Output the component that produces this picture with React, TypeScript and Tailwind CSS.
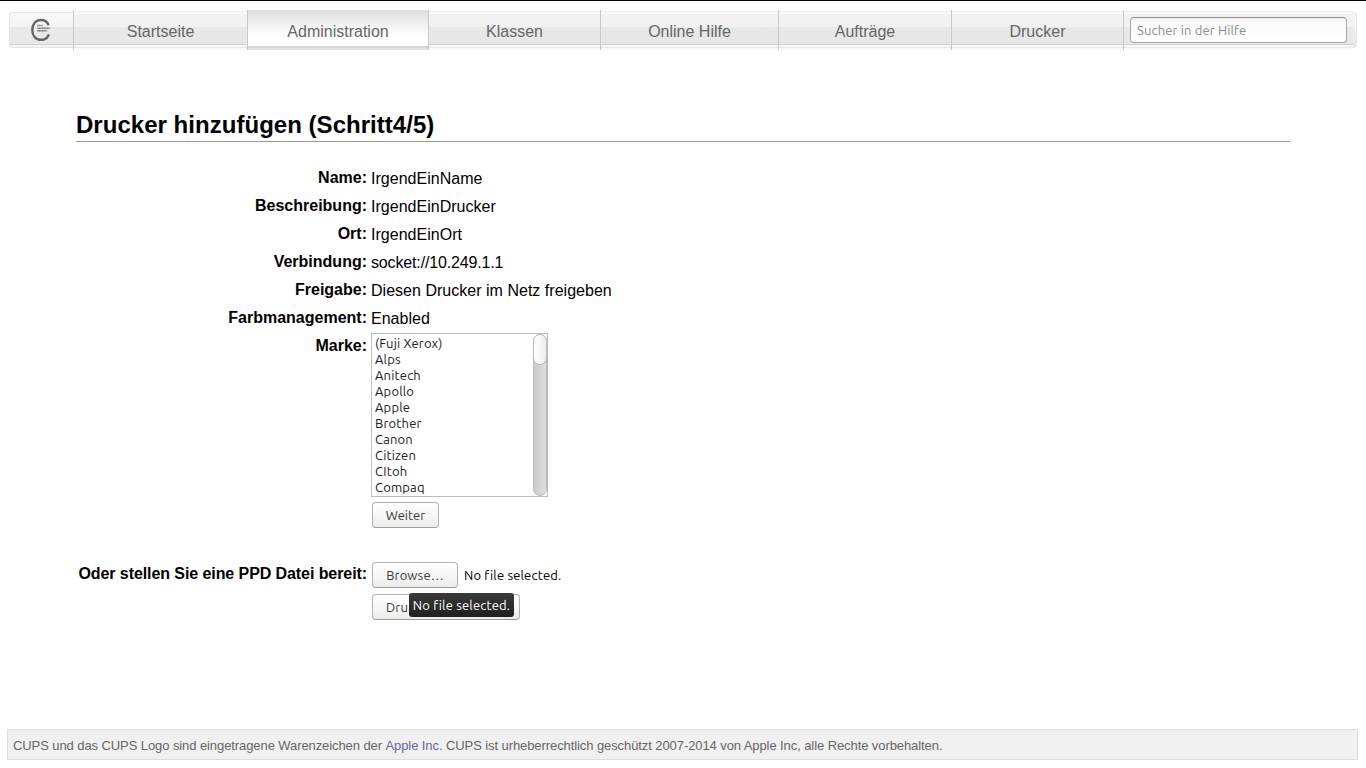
import React from "react";

const tabs = [
  { label: "Startseite", width: "w-[174px]" },
  { label: "Administration", width: "w-[181px]", active: true },
  { label: "Klassen", width: "w-[172px]" },
  { label: "Online Hilfe", width: "w-[178px]" },
  { label: "Aufträge", width: "w-[173px]" },
  { label: "Drucker", width: "w-[172px]" },
];

const details = [
  { name: "Name:", value: "IrgendEinName" },
  { name: "Beschreibung:", value: "IrgendEinDrucker" },
  { name: "Ort:", value: "IrgendEinOrt" },
  { name: "Verbindung:", value: "socket://10.249.1.1", tight: true },
  { name: "Freigabe:", value: "Diesen Drucker im Netz freigeben" },
  { name: "Farbmanagement:", value: "Enabled" },
];

const makes = ["(Fuji Xerox)", "Alps", "Anitech", "Apollo", "Apple", "Brother", "Canon", "Citizen", "CItoh", "Compaq"];

const widget = "font-['Ubuntu','Noto_Sans',sans-serif] text-[13px]";
const button =
  widget +
  " h-[26px] shrink-0 rounded-[4px] border border-[#b3b1ae] border-b-[#9f9d9a] bg-linear-to-b from-white to-[#ededec] pt-px text-[#3c3c3c] whitespace-nowrap";
const bar =
  "bg-[linear-gradient(#fff_0px,#fff_1px,#ebebeb_1px,#ebebeb_2px,#fafafa_2px,#fafafa_4px,#f2f2f2_4px,#f1f1f1_17px,#e8e8e8_17px,#e7e7e7_34px,#d0d0d0_34px,#d0d0d0_35px,#f7f7f7_35px,#f7f7f7_37px,#e9e9e9_37px,#e9e9e9_38px,#fafafa_38px)]";

function Logo() {
  return (
    <svg width="22" height="24" viewBox="0 0 22 24" className="-mt-px mr-[2px]">
      <path d="M18.7 7.2C17.2 3.7 14.5 2 11.1 2C5.7 2 2.3 6.1 2.3 12s3.4 9.8 8.8 9.8c3.6 0 6.5-1.9 7.8-5.5" fill="none" stroke="#666" strokeWidth="2.4" />
      <g stroke="#777" strokeWidth="1.5">
        <path d="M7.2 7.6h5.4" strokeDasharray="1.2 .35" />
        <path d="M7.2 10.2h12.6" strokeDasharray="1.3 .3" />
        <path d="M7.2 12.8h10" strokeDasharray="1.3 .3" />
      </g>
    </svg>
  );
}

function Label({ children, className = "" }: { children: React.ReactNode; className?: string }) {
  return <div className={`w-[291px] shrink-0 text-right font-bold leading-[26px] whitespace-nowrap ${className}`}>{children}</div>;
}

export default function App() {
  return (
    <div className="flex h-[768px] w-[1366px] flex-col overflow-hidden border-t border-black bg-white font-['Liberation_Sans',Arial,sans-serif] text-[16px] text-black">
      <nav className="mt-[9px] ml-[9px] flex h-10 w-[1348px] text-[#666]">
        <div className="mt-[2px] flex h-[36px] w-[64px] items-center justify-center rounded-l-[4px] border border-r-0 border-[#e5e5e5] bg-[linear-gradient(#f8f8f8_0px,#f3f3f3_14px,#e9e9e9_14px,#e8e8e8_31px,#d1d1d1_31px,#d1d1d1_32px,#f5f5f5_32px)]">
          <Logo />
        </div>
        {tabs.map((tab) => (
          <a
            key={tab.label}
            className={`${tab.width} flex h-10 shrink-0 items-center justify-center border-l border-[#c8c8c8] pt-[3px] ${
              tab.active ? "bg-[linear-gradient(#dedede_0px,#f1f1f1_14px,#fff_28px,#fff_36px,#d3d3d3_36px,#e5e5e5_40px)]" : bar
            }`}
          >
            {tab.label}
          </a>
        ))}
        <div className={`flex w-[230px] border-l border-[#c8c8c8] pt-[7px] pl-[6px] ${bar}`}>
          <input
            placeholder="Sucher in der Hilfe"
            className={`${widget} h-[26px] w-[217px] shrink-0 rounded-[4px] border border-[#aaa8a5] border-t-[#8e8c89] bg-linear-to-b from-[#f1f1f1] via-[#fafafa] via-20% to-white pl-[6px] tracking-[0.14px] placeholder:text-[#8c8c8c]`}
          />
        </div>
        <div className="mt-[2px] h-[36px] w-[4px] rounded-r-[4px] border border-l-0 border-[#e5e5e5] bg-linear-to-b from-[#f8f8f8] to-[#e8e8e8]" />
      </nav>

      <main className="ml-[76px] flex h-[679px] w-[1214px] flex-col pt-[59px]">
        <h1 className="h-[33px] shrink-0 border-b border-[#999] text-[24px] leading-[32px] font-bold tracking-[0.03px]">Drucker hinzufügen (Schritt4/5)</h1>
        <div className="mt-[23px] flex flex-col">
          {details.map((row) => (
            <div key={row.name} className="flex h-7 gap-1">
              <Label>{row.name}</Label>
              <div className={row.tight ? "leading-[28px] tracking-[-0.15px]" : "leading-[28px] tracking-[0.02px]"}>{row.value}</div>
            </div>
          ))}
          <div className="flex h-[169px] gap-1">
            <Label>Marke:</Label>
            <div className="flex h-[164px] w-[177px] justify-between border border-[#c0bebb] bg-white">
              <ul className={`${widget} pt-px pl-[3px] tracking-[0.17px] text-[#222]`}>
                {makes.map((make) => (
                  <li key={make} className="h-4 leading-[16px]">{make}</li>
                ))}
              </ul>
              <div className="h-[162px] w-[14px] rounded-full border border-[#b9b9b9] bg-linear-to-r from-[#cbcbcb] to-[#dfdfdf]">
                <div className="-mt-px -ml-px h-[31px] w-[14px] rounded-full border border-[#bdbbb8] bg-linear-to-r from-white to-[#eeeeed]" />
              </div>
            </div>
          </div>
          <div className="ml-[296px] flex h-[26px]">
            <button className={`${button} w-[67px]`}>Weiter</button>
          </div>
        </div>
        <div className="mt-[33px] flex gap-1">
          <Label className="tracking-[-0.08px]">Oder stellen Sie eine PPD Datei bereit:</Label>
          <div className="mt-px ml-px flex flex-col gap-[6px]">
            <div className="flex items-center gap-[6px]">
              <button className={`${button} w-[86px] tracking-[0.14px]`}>Browse…</button>
              <span className={`${widget} pt-px tracking-[0.17px]`}>No file selected.</span>
            </div>
            <div className="relative flex">
              <button className={`${button} w-[148px] pl-[13px] text-left tracking-[0.14px]`}>Dru</button>
              <div className={`${widget} absolute top-[-1px] left-[37px] flex h-6 w-[105px] items-center justify-center rounded-[3px] bg-linear-to-b from-[#3a3a3a] to-[#202020] pt-[2px] tracking-[0.17px] whitespace-nowrap text-white`}>
                No file selected.
              </div>
            </div>
          </div>
        </div>
      </main>

      <footer className="ml-[7px] flex h-[31px] w-[1351px] shrink-0 items-center border border-[#dedede] bg-[#f0f0f0] pt-[2px] pl-[5px] text-[13px] tracking-[-0.086px] whitespace-pre text-[#666]">
        CUPS und das CUPS Logo sind eingetragene Warenzeichen der <a className="text-[#666699]">Apple Inc.</a> CUPS ist urheberrechtlich geschützt 2007-2014 von Apple Inc, alle Rechte vorbehalten.
      </footer>
    </div>
  );
}
